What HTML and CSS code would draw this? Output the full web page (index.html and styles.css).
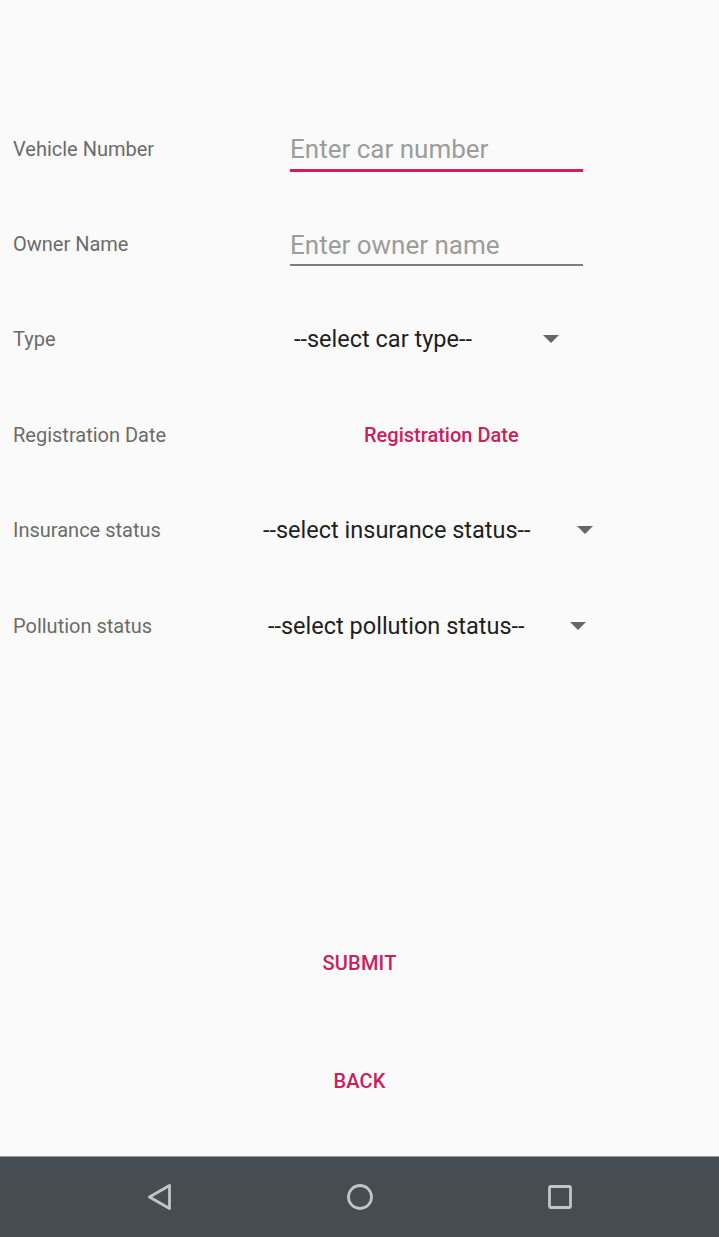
FILE: index.html
```html
<!DOCTYPE html>
<html>
<head>
<meta charset="utf-8">
<link rel="stylesheet" href="styles.css">
</head>
<body>
<div class="screen">
  <main class="content">
    <form class="form">
      <div class="row">
        <span class="label">Vehicle Number</span>
        <div class="field">
          <div class="edit edit--focused">Enter car number</div>
        </div>
      </div>
      <div class="row">
        <span class="label">Owner Name</span>
        <div class="field">
          <div class="edit">Enter owner name</div>
        </div>
      </div>
      <div class="row">
        <span class="label">Type</span>
        <div class="field">
          <div class="spinner spinner--type">
            <span class="spinner-text">--select car type--</span>
            <span class="arrow"></span>
          </div>
        </div>
      </div>
      <div class="row">
        <span class="label">Registration Date</span>
        <div class="field">
          <span class="date-btn">Registration Date</span>
        </div>
      </div>
      <div class="row">
        <span class="label">Insurance status</span>
        <div class="field">
          <div class="spinner spinner--insurance">
            <span class="spinner-text">--select insurance status--</span>
            <span class="arrow"></span>
          </div>
        </div>
      </div>
      <div class="row">
        <span class="label">Pollution status</span>
        <div class="field">
          <div class="spinner spinner--pollution">
            <span class="spinner-text">--select pollution status--</span>
            <span class="arrow"></span>
          </div>
        </div>
      </div>
    </form>
    <div class="actions">
      <span class="text-btn">SUBMIT</span>
      <span class="text-btn">BACK</span>
    </div>
  </main>
  <nav class="navbar">
    <div class="nav-item">
      <svg width="30" height="30" viewBox="0 0 30 30"><polygon points="24.5,3.5 4.5,15 24.5,26.5" fill="none" stroke="#c1c5c7" stroke-width="2.8" stroke-linejoin="round"/></svg>
    </div>
    <div class="nav-item">
      <svg width="30" height="30" viewBox="0 0 30 30"><circle cx="15" cy="15" r="11.5" fill="none" stroke="#c1c5c7" stroke-width="2.8"/></svg>
    </div>
    <div class="nav-item">
      <svg width="30" height="30" viewBox="0 0 30 30"><rect x="4.5" y="4.5" width="21" height="21" rx="1.5" fill="none" stroke="#c1c5c7" stroke-width="2.8"/></svg>
    </div>
  </nav>
</div>
</body>
</html>
```
FILE: styles.css
```css
* { box-sizing: border-box; }
html, body {
  margin: 0;
  padding: 0;
}
body {
  background: #fafafa;
  font-family: Roboto, "Noto Sans", sans-serif;
}
.screen {
  width: 719px;
  height: 1237px;
  display: flex;
  flex-direction: column;
}
.content {
  flex: 1;
  display: flex;
  flex-direction: column;
}
.form {
  padding-top: 101px;
  margin: 0;
}
.row {
  height: 95.4px;
  display: grid;
  grid-template-columns: 250px 1fr;
  align-items: center;
}
.label {
  padding-left: 13px;
  font-size: 20px;
  color: #6b6b6b;
  line-height: 24px;
}
.field {
  display: flex;
  align-items: center;
}
.edit {
  margin-left: 40px;
  width: 293px;
  font-size: 26px;
  line-height: 30px;
  color: #9c9c9c;
  padding: 8px 0 4px 0;
  border-bottom: 2px solid #7d7d7d;
}
.edit--focused {
  padding-bottom: 5px;
  border-bottom: 3px solid #d81b60;
}
.spinner {
  display: flex;
  align-items: center;
}
.spinner-text {
  font-size: 23.5px;
  color: #1f1f1f;
  line-height: 30px;
}
.arrow {
  width: 0;
  height: 0;
  border-left: 8px solid transparent;
  border-right: 8px solid transparent;
  border-top: 8px solid #666;
}
.spinner--type { margin-left: 44px; }
.spinner--type .arrow { margin-left: 71px; }
.spinner--insurance { margin-left: 13px; }
.spinner--insurance .arrow { margin-left: 46px; }
.spinner--pollution { margin-left: 18px; }
.spinner--pollution .arrow { margin-left: 45px; }
.date-btn {
  margin-left: 114px;
  font-size: 20px;
  font-weight: 500;
  color: #c9215f;
  line-height: 24px;
}
.actions {
  margin-top: 266px;
  display: flex;
  flex-direction: column;
  align-items: center;
  gap: 70px;
}
.text-btn {
  height: 48px;
  display: flex;
  align-items: center;
  font-size: 20px;
  font-weight: 500;
  letter-spacing: 0.2px;
  color: #c9215f;
}
.navbar {
  height: 81px;
  background: #454c52;
  border-top: 1px solid #9a9ea1;
  display: flex;
  padding: 0 59.5px;
  align-items: center;
}
.nav-item {
  flex: 1;
  display: flex;
  justify-content: center;
}
.nav-item svg { display: block; }
```
